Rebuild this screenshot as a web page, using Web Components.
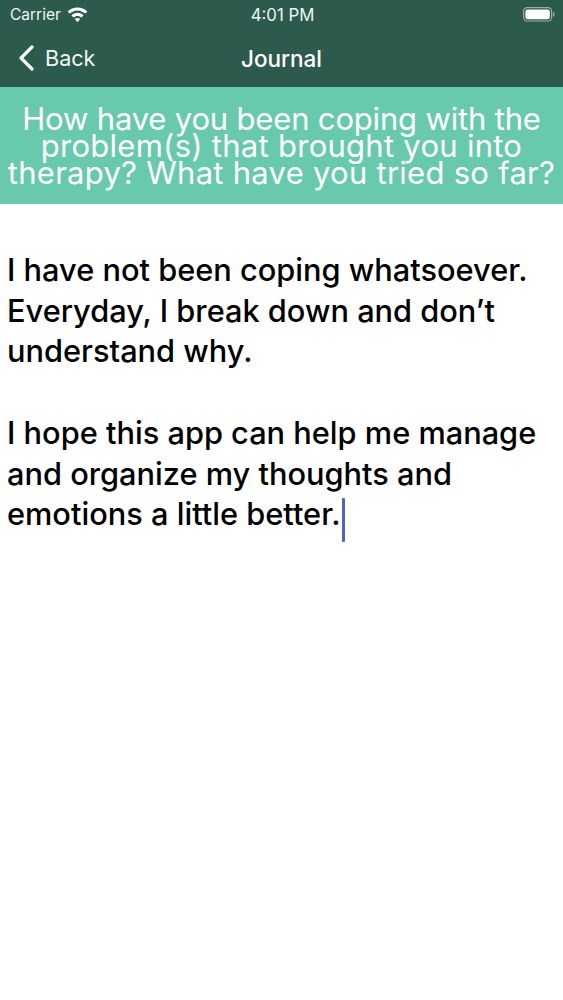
<!DOCTYPE html>
<html>
<head>
<meta charset="utf-8">
<style>
html, body { margin: 0; padding: 0; background: #fff; }
body { width: 563px; height: 1000px; overflow: hidden; font-family: Inter, "Liberation Sans", sans-serif; }
</style>
</head>
<body>
<app-header></app-header>
<prompt-banner><span style="letter-spacing: -.17px">How have you been coping with the</span><br>problem(s) that brought you into<br>therapy? What have you tried so far?</prompt-banner>
<journal-entry>
    <p>I have not been coping whatsoever.<br>Everyday, I break down and don’t<br>understand why.</p>
    <p>I hope this app can help me manage<br>and organize my thoughts and<br>emotions a little better.<text-caret></text-caret></p>
</journal-entry>

<script>
class AppHeader extends HTMLElement {
    constructor() {
        super();
        this.attachShadow({mode: "open"});
        this.shadowRoot.innerHTML = `
<style>
:host {
    display: block;
    height: 87px;
    background: #2c5b4d;
    color: #eef7f3;
}
.status {
    height: 29px;
    padding: 0 8px 0 10px;
    display: grid;
    grid-template-columns: 1fr auto 1fr;
    align-items: center;
    font-size: 15.5px;
}
.left { display: flex; align-items: center; gap: 6px; }
.right { display: flex; justify-content: flex-end; }
.time { font-size: 16.8px; }
.nav {
    height: 58px;
    display: grid;
    grid-template-columns: 1fr auto 1fr;
    align-items: center;
    padding: 0 18px;
}
.back { display: flex; align-items: center; gap: 11px; font-size: 21.6px; font-weight: 400; }
.title { font-size: 22.5px; font-weight: 500; color: #fff; }
</style>
<div class="status">
    <div class="left">
        <span>Carrier</span>
        <svg width="21" height="16" viewBox="0 0 21 16">
            <path fill="#fff" d="M10.5 0.4c3.8 0 7.3 1.5 9.9 4l-2.1 2.2c-2-1.9-4.8-3.2-7.8-3.2s-5.8 1.3-7.8 3.2l-2.1-2.2c2.6-2.5 6.1-4 9.9-4z"/>
            <path fill="#fff" d="M10.5 5.8c2.4 0 4.5.9 6.1 2.5l-2.1 2.2c-1-1-2.4-1.6-4-1.6s-3 .6-4 1.6l-2.1-2.2c1.6-1.6 3.7-2.5 6.1-2.5z"/>
            <path fill="#fff" d="M10.5 11c1 0 2 .4 2.7 1.1l-2.7 3.1-2.7-3.1c.7-.7 1.7-1.1 2.7-1.1z"/>
        </svg>
    </div>
    <div class="time">4:01 PM</div>
    <div class="right">
        <svg width="32" height="15" viewBox="0 0 32 15">
            <rect x="0.6" y="0.6" width="28" height="13.4" rx="3.6" fill="none" stroke="#8fb3a6" stroke-width="1.2"/>
            <rect x="2.4" y="2.4" width="24.4" height="9.8" rx="2.2" fill="#fff"/>
            <rect x="30" y="5" width="1.4" height="4.6" rx="0.7" fill="#8fb3a6"/>
        </svg>
    </div>
</div>
<div class="nav">
    <div class="back">
        <svg width="16" height="26" viewBox="0 0 16 26">
            <path d="M14 2 L3 13 L14 24" fill="none" stroke="#f4faf7" stroke-width="3.2" stroke-linecap="round" stroke-linejoin="round"/>
        </svg>
        <span>Back</span>
    </div>
    <div class="title">Journal</div>
    <div></div>
</div>`;
    }
}

class PromptBanner extends HTMLElement {
    constructor() {
        super();
        this.attachShadow({mode: "open"});
        this.shadowRoot.innerHTML = `
<style>
:host {
    display: flex;
    box-sizing: border-box;
    height: 117px;
    align-items: center;
    justify-content: center;
    background: #68c9ad;
    color: #fff;
    font-size: 31px;
    letter-spacing: .27px;
    line-height: 27.3px;
    text-align: center;
    white-space: nowrap;
}
</style>
<div><slot></slot></div>`;
    }
}

class JournalEntry extends HTMLElement {
    constructor() {
        super();
        this.attachShadow({mode: "open"});
        this.shadowRoot.innerHTML = `
<style>
:host {
    display: block;
    padding: 46px 7px 0 7px;
    color: #000;
    font-size: 30.75px;
    font-weight: 500;
    line-height: 40.7px;
    white-space: nowrap;
}
::slotted(p) {
    margin: 0 0 40.7px 0 !important;
}
</style>
<slot></slot>`;
    }
}

class TextCaret extends HTMLElement {
    constructor() {
        super();
        this.attachShadow({mode: "open"});
        this.shadowRoot.innerHTML = `
<style>
:host {
    display: inline-block;
    width: 3px;
    height: 44px;
    margin: -4px -3px -4px 2px;
    vertical-align: -13px;
    background: #4a64c8;
    border-radius: 1px;
}
</style>`;
    }
}

customElements.define("app-header", AppHeader);
customElements.define("prompt-banner", PromptBanner);
customElements.define("journal-entry", JournalEntry);
customElements.define("text-caret", TextCaret);
</script>
</body>
</html>
